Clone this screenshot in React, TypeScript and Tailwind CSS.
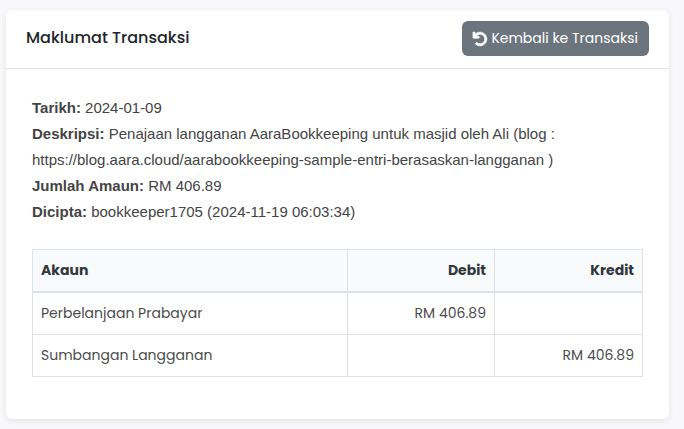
import { FaUndo } from "react-icons/fa";

const entries = [
  { account: "Perbelanjaan Prabayar", debit: "RM 406.89", credit: "" },
  { account: "Sumbangan Langganan", debit: "", credit: "RM 406.89" },
];

const details = [
  { label: "Tarikh:", value: "2024-01-09" },
  {
    label: "Deskripsi:",
    value:
      "Penajaan langganan AaraBookkeeping untuk masjid oleh Ali (blog : https://blog.aara.cloud/aarabookkeeping-sample-entri-berasaskan-langganan )",
  },
  { label: "Jumlah Amaun:", value: "RM 406.89" },
  { label: "Dicipta:", value: "bookkeeper1705 (2024-11-19 06:03:34)" },
];

export default function App() {
  return (
    <div className="min-h-screen bg-[#f8f7fa] pt-[10px] pr-[15px] pb-[10px] pl-[6px] font-['Poppins','Inter',sans-serif] text-[#444]">
      <main className="rounded-md bg-white shadow-[0_2px_6px_rgba(0,0,0,0.08)]">
        <header className="flex items-center justify-between border-b border-[#dfe1e3] px-5 pt-[11px] pb-3">
          <h1 className="pb-[2px] text-[16px] leading-6 font-medium text-[#212529]">Maklumat Transaksi</h1>
          <button
            type="button"
            className="flex h-[35px] items-center gap-1 rounded-md bg-[#6c757d] px-[11px] text-[14px] text-white"
          >
            <FaUndo className="size-[14px] overflow-visible" strokeWidth={28} aria-hidden="true" />
            Kembali ke Transaksi
          </button>
        </header>
        <section className="px-[26px] pt-[26px] pb-[42px]">
          <div className="mb-6 font-['Liberation_Sans',sans-serif] text-[15px] leading-[26px]">
            {details.map((item) => (
              <p key={item.label}>
                <strong className="font-bold">{item.label}</strong> {item.value}
              </p>
            ))}
          </div>
          <table className="w-full table-fixed border-collapse text-[14px] leading-[25px]">
            <thead>
              <tr className="bg-[#f8fafc] text-[#32373c]">
                <th scope="col" className="border border-b-2 border-[#dee2e6] p-2 text-left font-bold">Akaun</th>
                <th scope="col" className="w-[147px] border border-b-2 border-[#dee2e6] p-2 text-right font-bold">Debit</th>
                <th scope="col" className="w-[148px] border border-b-2 border-[#dee2e6] p-2 text-right font-bold">Kredit</th>
              </tr>
            </thead>
            <tbody className="text-[#4c4c4c]">
              {entries.map((entry) => (
                <tr key={entry.account}>
                  <td className="border border-[#dee2e6] p-2">{entry.account}</td>
                  <td className="border border-[#dee2e6] p-2 text-right">{entry.debit}</td>
                  <td className="border border-[#dee2e6] p-2 text-right">{entry.credit}</td>
                </tr>
              ))}
            </tbody>
          </table>
        </section>
      </main>
    </div>
  );
}
